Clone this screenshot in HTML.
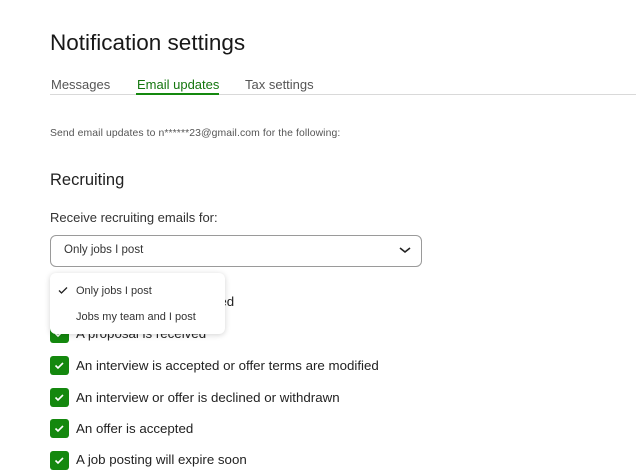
<!DOCTYPE html>
<html><head><meta charset="utf-8"><style>
*{margin:0;padding:0;box-sizing:border-box}
body{width:636px;height:461px;overflow:hidden;background:#fff;font-family:"Liberation Sans",sans-serif;color:#222;position:relative}
.a{position:absolute;white-space:nowrap}
.cb{position:absolute;left:50px;width:19px;height:19px;background:#14880e;border-radius:3px}
.cb svg{position:absolute;left:4px;top:5px}
.t{position:absolute;left:76px;font-size:13.3px;color:#222}
</style></head><body>
<div class="a" style="left:50px;top:30px;font-size:22.5px;color:#181818">Notification settings</div>
<div class="a" style="left:51px;top:77px;font-size:13px;color:#555">Messages</div>
<div class="a" style="left:137px;top:77px;font-size:13px;color:#14760e">Email updates</div>
<div class="a" style="left:245px;top:77px;font-size:13px;color:#555">Tax settings</div>
<div class="a" style="left:50px;top:94px;width:586px;height:1px;background:#d9d9d9"></div>
<div class="a" style="left:136px;top:93px;width:83px;height:2px;background:#14880e"></div>
<div class="a" style="left:50px;top:128px;font-size:10.4px;color:#555;letter-spacing:0.1px">Send email updates to n******23@gmail.com for the following:</div>
<div class="a" style="left:50px;top:171px;font-size:16.5px;color:#222">Recruiting</div>
<div class="a" style="left:50px;top:210px;font-size:13px;color:#333">Receive recruiting emails for:</div>
<div class="a" style="left:50px;top:235px;width:372px;height:32px;border:1px solid #9a9a9a;border-radius:6px"></div>
<div class="a" style="left:64px;top:244px;font-size:11.5px;color:#333">Only jobs I post</div>
<svg class="a" style="left:398px;top:245px" width="14" height="10" viewBox="0 0 14 10"><path d="M2 3l5 4 5-4" fill="none" stroke="#222" stroke-width="1.6"/></svg>
<div class="t" style="top:294px">A new proposal is received</div>
<div class="cb" style="top:324px"><svg width="11" height="9" viewBox="0 0 11 9"><path d="M1.5 4.5l2.5 2.5 5-5" fill="none" stroke="#fff" stroke-width="1.6"/></svg></div>
<div class="t" style="top:326px">A proposal is received</div>
<div class="cb" style="top:356px"><svg width="11" height="9" viewBox="0 0 11 9"><path d="M1.5 4.5l2.5 2.5 5-5" fill="none" stroke="#fff" stroke-width="1.6"/></svg></div>
<div class="t" style="top:358px">An interview is accepted or offer terms are modified</div>
<div class="cb" style="top:388px"><svg width="11" height="9" viewBox="0 0 11 9"><path d="M1.5 4.5l2.5 2.5 5-5" fill="none" stroke="#fff" stroke-width="1.6"/></svg></div>
<div class="t" style="top:390px">An interview or offer is declined or withdrawn</div>
<div class="cb" style="top:419px"><svg width="11" height="9" viewBox="0 0 11 9"><path d="M1.5 4.5l2.5 2.5 5-5" fill="none" stroke="#fff" stroke-width="1.6"/></svg></div>
<div class="t" style="top:421px">An offer is accepted</div>
<div class="cb" style="top:451px"><svg width="11" height="9" viewBox="0 0 11 9"><path d="M1.5 4.5l2.5 2.5 5-5" fill="none" stroke="#fff" stroke-width="1.6"/></svg></div>
<div class="t" style="top:452px">A job posting will expire soon</div>
<div class="a" style="left:50px;top:273px;width:175px;height:61px;background:#fff;border-radius:6px;box-shadow:0 1px 6px rgba(0,0,0,.18)"></div>
<svg class="a" style="left:58px;top:286px" width="10" height="9" viewBox="0 0 10 9"><path d="M1 4.5l2.5 2.5L9 1.5" fill="none" stroke="#222" stroke-width="1.3"/></svg>
<div class="a" style="left:76px;top:285px;font-size:11px;color:#333">Only jobs I post</div>
<div class="a" style="left:76px;top:311px;font-size:11px;color:#333">Jobs my team and I post</div>
</body></html>
